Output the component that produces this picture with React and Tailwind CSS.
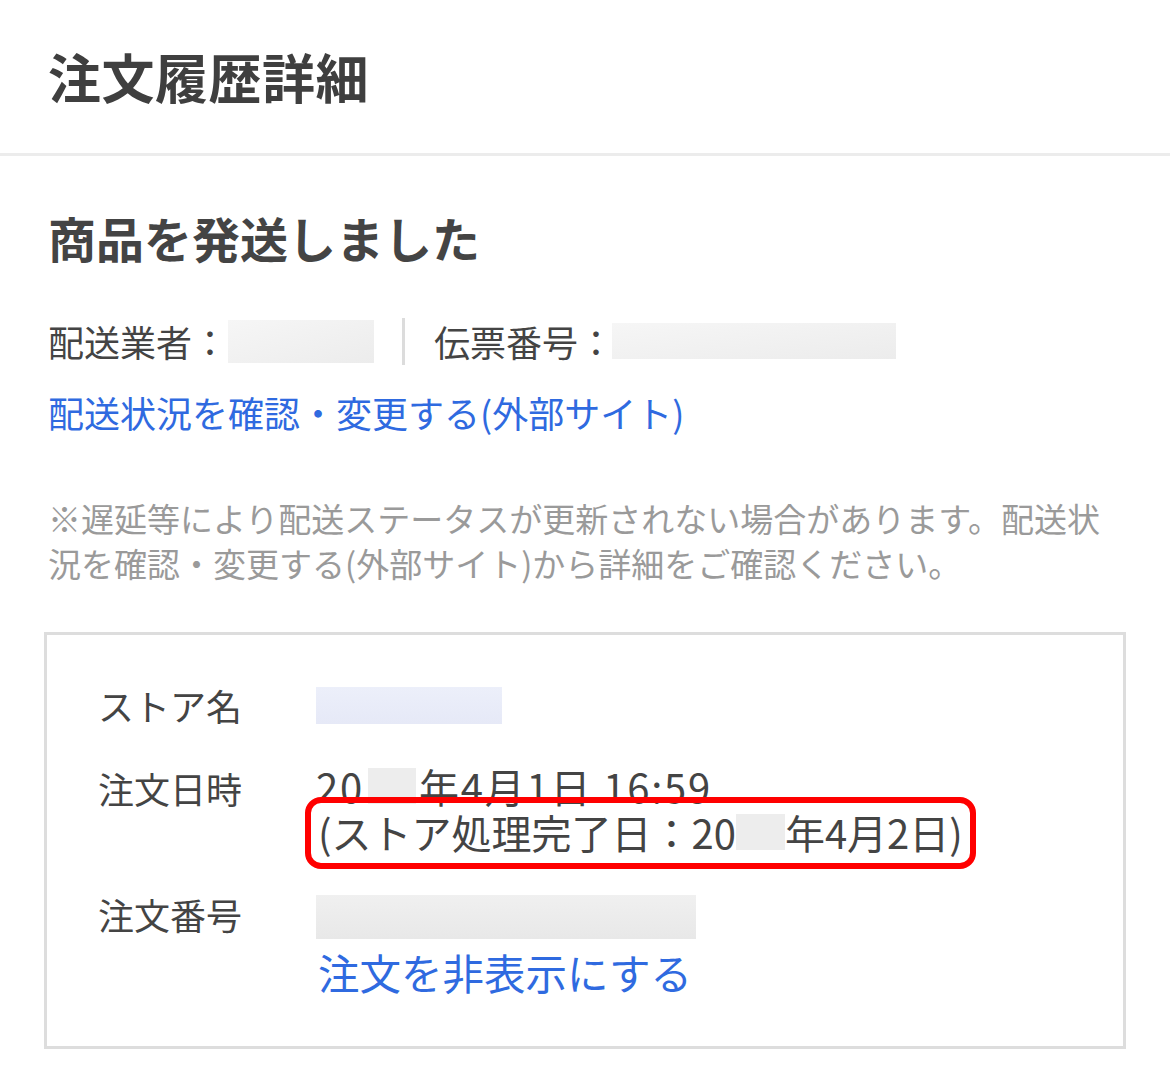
export default function App() {
  const font = { fontFamily: '"Noto Sans CJK JP", "Noto Sans", sans-serif' };
  return (
    <div className="w-[1170px] bg-white text-[#444]" style={font}>
      <div className="h-[156px] flex items-center pl-[48px] border-b-[3px] border-[#ececec]">
        <h1 className="text-[53px] font-bold leading-none tracking-[0.5px] text-[#3f3f3f]">注文履歴詳細</h1>
      </div>
      <div className="pl-[48px] pr-[44px]">
        <h2 className="mt-[46px] text-[48px] font-bold leading-[70px] text-[#444]">商品を発送しました</h2>
        <div className="mt-[45px] h-[48px] flex items-center text-[36px] leading-none">
          <span>配送業者：</span>
          <span className="ml-[0px] w-[146px] h-[43px] bg-linear-to-br from-[#f6f6f6] to-[#ececec]"></span>
          <span className="ml-[28px] w-[3px] h-[47px] bg-[#dcdcdc]"></span>
          <span className="ml-[29px]">伝票番号：</span>
          <span className="ml-[-2px] w-[284px] h-[36px] bg-linear-to-br from-[#f6f6f6] to-[#ececec]"></span>
        </div>
        <a className="mt-[20px] block text-[36px] leading-[54px] text-[#2f6ae0]">配送状況を確認・変更する(外部サイト)</a>
        <p className="mt-[57px] text-[33px] leading-[45px] text-[#9a9a9a]">
          ※遅延等により配送ステータスが更新されない場合があります。配送状況を確認・変更する(外部サイト)から詳細をご確認ください。
        </p>
        <div className="mt-[46px] ml-[-4px] border-[3px] border-[#dddddd] pl-[51px] pt-[47px] pb-[49px]">
          <div className="flex">
            <div className="w-[218px] text-[36px] leading-[46px]">ストア名</div>
            <div className="h-[46px] flex items-center">
              <span className="w-[186px] h-[37px] bg-linear-to-b from-[#eceffa] to-[#e6e9f7]"></span>
            </div>
          </div>
          <div className="flex mt-[35px]">
            <div className="w-[218px] text-[36px] leading-[46px] mt-[2px]">注文日時</div>
            <div className="text-[40px] leading-[46px] text-[#444]">
              <div className="flex items-center tracking-[1.8px]">
                <span>20</span>
                <span className="ml-[4px] w-[48px] h-[36px] bg-[#ededed]"></span>
                <span className="ml-[3px]">年4月1日 16:59</span>
              </div>
              <div className="relative inline-flex items-center ml-[2px]">
                <span>(ストア処理完了日：20</span>
                <span className="w-[49px] h-[36px] bg-[#ededed]"></span>
                <span>年4月2日)</span>
                <span className="absolute left-[-13px] right-[-13px] top-[-12px] bottom-[-14px] border-[6px] border-[#ff0000] rounded-[16px]"></span>
              </div>
            </div>
          </div>
          <div className="flex mt-[40px]">
            <div className="w-[218px] text-[36px] leading-[38px]">注文番号</div>
            <div>
              <div className="w-[380px] h-[44px] bg-linear-to-b from-[#f0f0f0] to-[#e8e8e8]"></div>
              <a className="mt-[8px] block text-[41.5px] leading-[50px] text-[#2f6ae0] ml-[2px]">注文を非表示にする</a>
            </div>
          </div>
        </div>
      </div>
      <div className="h-[46px]"></div>
    </div>
  );
}
